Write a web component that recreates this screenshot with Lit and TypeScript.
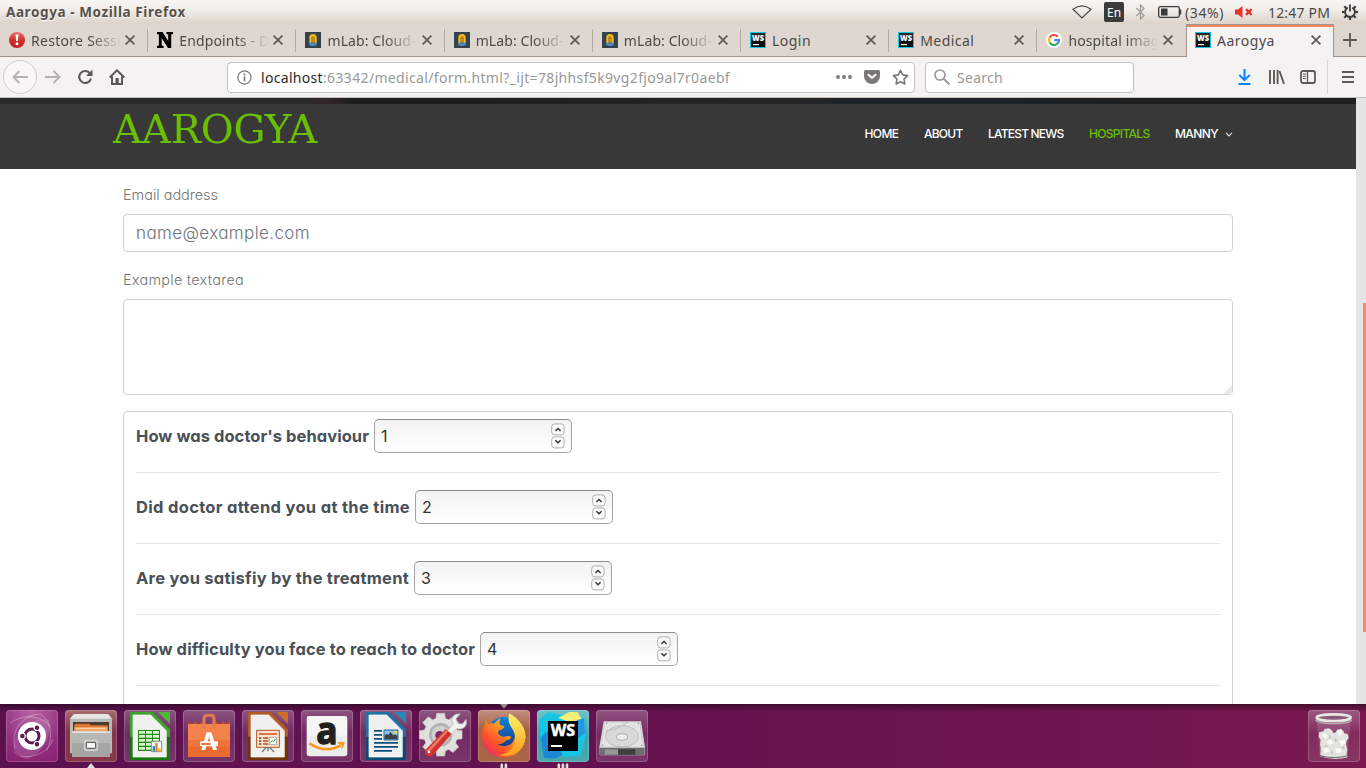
import { LitElement, html, css, svg, nothing } from "lit";
import { customElement, property } from "lit/decorators.js";

/** A single-line label whose letter spacing is tuned to a given advance width. */
@customElement("fit-text")
class FitText extends LitElement {
  @property() text = "";
  @property({ type: Number }) w = 0;
  static styles = css`
    :host { display: inline-block; white-space: pre; flex: none; }
  `;
  firstUpdated() {
    const s = this.renderRoot.querySelector("span") as HTMLElement;
    const gap = (this.w - s.getBoundingClientRect().width) / this.text.length;
    s.style.letterSpacing = gap.toFixed(3) + "px";
    this.style.width = this.w + "px";
  }
  render() {
    return html`<span>${this.text}</span>`;
  }
}

const t = (text: string, w: number) => html`<fit-text .text=${text} .w=${w}></fit-text>`;

/* ---------- favicons, 16x16 ---------- */
const favAlert = svg`<svg width="16" height="16" viewBox="0 0 16 16"><defs><linearGradient id="al" x2="0" y2="1"><stop stop-color="#e8746f"/><stop offset=".5" stop-color="#d42f2c"/><stop offset="1" stop-color="#c01e1e"/></linearGradient></defs><circle cx="8" cy="8" r="8" fill="url(#al)"/><path d="M6.6 2.6h2.8L9 9H7z" fill="#fff"/><circle cx="8" cy="11.8" r="1.5" fill="#fff"/></svg>`;
const favN = svg`<svg width="16" height="16" viewBox="0 0 16 16"><path d="M0 0h5.6l5.6 9V2.6L9.4 2V0H16v2l-1.800.6V16h-3.200L4.700 6v7.400l1.900.6v2H0v-2l1.900-.6V2.600L0 2z" fill="#000"/></svg>`;
const favMlab = svg`<svg width="16" height="16" viewBox="0 0 16 16"><path d="M0 0h16v16H0z" fill="#36424b"/><path d="M4.300 11V5.600a3.700 3.700 0 0 1 7.400 0V11z" fill="#f5b921"/><path d="M4.300 10.500h7.400v2.800q-3.700 1.400-7.400 0z" fill="#4a90d9"/><path d="M7 12V5.800a1 1 0 0 1 2 0V12" fill="none" stroke="#7a5a12" stroke-width=".9"/></svg>`;
const favWs = svg`<svg width="16" height="16" viewBox="0 0 16 16"><path d="M0 0h16v16H0z" fill="#16c5e6"/><path d="M1 1h14v14H1z" fill="#111"/><path d="M1 1h14v7H1z" fill="#333" opacity=".7"/><text x="8" y="8.600" text-anchor="middle" textLength="12" lengthAdjust="spacingAndGlyphs" font-family="Open Sans, sans-serif" font-weight="800" font-size="7.800" fill="#fff">WS</text><path d="M3 12h6v1.200H3z" fill="#fff"/></svg>`;
const favG = svg`<svg width="16" height="16" viewBox="0 0 16 16"><circle cx="8" cy="8" r="8" fill="#fff"/><g fill="none" stroke-width="2.200"><path d="M11.700 4.600A5 5 0 0 0 3.700 5.500" stroke="#ea4335"/><path d="M3.700 5.500a5 5 0 0 0 0 5" stroke="#fbbc05"/><path d="M3.700 10.500a5 5 0 0 0 7.400 1.400" stroke="#34a853"/><path d="M11.100 11.900A5 5 0 0 0 13 8.100H8.200" stroke="#4285f4"/></g></svg>`;

const tabs = [
  { icon: favAlert, text: "Restore Sessi", w: 90, fade: true },
  { icon: favN, text: "Endpoints - D", w: 90, fade: true },
  { icon: favMlab, text: "mLab: Cloud-", w: 88, fade: true },
  { icon: favMlab, text: "mLab: Cloud-", w: 88, fade: true },
  { icon: favMlab, text: "mLab: Cloud-", w: 88, fade: true },
  { icon: favWs, text: "Login", w: 39, fade: false },
  { icon: favWs, text: "Medical", w: 54, fade: false },
  { icon: favG, text: "hospital imag", w: 91, fade: true },
  { icon: favWs, text: "Aarogya", w: 58, fade: false, active: true },
] as any[];

const closeX = svg`<svg class="x" width="10" height="10" viewBox="0 0 10 10"><path d="M.6.600l8.800 8.800M9.400.600L.6 9.400" stroke="#5c5854" stroke-width="1.700"/></svg>`;

/* ---------- launcher icons, drawn on a 156-unit tile ---------- */
const office = (x: number, dark: string, mid: string, body: any) => svg`
  <path d="M${x} 38q0-2 2-2h66l52 52v88q0 4-4 4H${x + 4}q-4 0-4-4z" fill="${dark}"/>
  <path d="M${x} 38q0-2 2-2h66l52 52v22H${x}z" fill="${mid}" opacity=".7"/>
  <path d="M${x + 9} 45h53l47 47v79H${x + 9}z" fill="#f0f0f0" stroke="#fff" stroke-width="2"/>
  <path d="M${x + 84} 36h36v36z" fill="${mid}"/>${body}`;

const dash = svg`
  <path d="M42 160C34 95 85 48 148 60c8 50-18 100-70 118z" fill="#fff" opacity=".13"/>
  <path d="M30 70c40-30 95-25 122 12M45 145C30 90 70 45 120 42c35 20 40 70 20 110M60 168c50 10 90-20 98-50" fill="none" stroke="#fff" stroke-width="3" opacity=".3"/>
  <circle cx="96" cy="108" r="42" fill="#fff"/>
  <circle cx="96" cy="108" r="21" fill="none" stroke="#5f1a4c" stroke-width="9"/>
  <g stroke="#fff" stroke-width="3.500" fill="#5f1a4c"><circle cx="67" cy="108" r="8.500"/><circle cx="111" cy="83" r="8.500"/><circle cx="111" cy="133" r="8.500"/></g>`;
const files = svg`
  <path d="M222 42h102l12 16v102H210V58z" fill="#b9b9b7"/>
  <path d="M222 42h102l12 14H210z" fill="#e6e6e4"/><path d="M219 66h108v34H219z" fill="#4a3a30"/>
  <path d="M223 76l4-5h42l4 5h50v24H223z" fill="#dd7434"/><path d="M223 81h100v17H223z" fill="#f1a667"/><path d="M228 85h90" stroke="#fff" stroke-width="2" opacity=".8"/>
  <path d="M216 94h114v77H216z" fill="#a5a5a3"/><path d="M216 94h114v5H216z" fill="#e0e0de"/><path d="M216 99h114v30H216z" fill="#bcbcba" opacity=".8"/>
  <rect x="253" y="121" width="40" height="31" rx="5" fill="#c9c9c7" stroke="#dededc" stroke-width="2"/><rect x="259" y="127" width="28" height="18" rx="2" fill="#f6f6f6" stroke="#4a4a4a" stroke-width="3"/>`;
const calc = office(390, "#18780f", "#4cb738", svg`
  <path d="M414 90h66v63h-66z" fill="#22890f"/><g fill="#d5f2cc">${[0, 1, 2, 3, 4].map((r) => [0, 1, 2].map((c) => svg`<path d="M${417 + c * 21} ${93 + r * 12}h18v8h-18z"/>`))}</g>
  <path d="M454 124h31v31h-31z" fill="#fff" stroke="#777" stroke-width="2.500"/><path d="M458 138h7v16h-7z" fill="#2c8ccd"/><path d="M466 129h7v25h-7z" fill="#ee7b2b"/><path d="M474 145h8v9h-8z" fill="#f5c21b"/>`);
const software = svg`
  <path d="M566 60l10 14 10-12 10 12 12-12 20 12 20-12 10 12 12-12 8 12 12-14v28H566z" fill="#b94d27"/>
  <path d="M564 72h126v99H564z" fill="#f0743a"/><path d="M564 72h126v48H564z" fill="#f58b56" opacity=".65"/><path d="M564 140h126v31H564z" fill="#e55f24" opacity=".5"/>
  <path d="M612 84V56q0-10 10-10h10q10 0 10 10v28" fill="none" stroke="#e57a50" stroke-width="9"/>
  <path d="M604 150l16-53h14l17 53h-12l-12-40-11 40z" fill="#fff"/><rect x="600" y="124" width="54" height="15" rx="4" fill="#fff"/><path d="M604 129h28v6h-28z" fill="#f0743a"/>`;
const impress = office(39, "#743207", "#cb6d2d", svg`
  <path d="M65 91h68v51H65z" fill="#f8e2d4" stroke="#b5521b" stroke-width="3"/><path d="M72 99h54v6H72z" fill="#db7440"/>
  <path d="M72 112h7v4h-7zm0 9h7v4h-7zm0 9h7v4h-7z" fill="#7d3a12"/><path d="M84 112h16v4H84zm0 9h16v4H84zm0 9h16v4H84z" fill="#b5521b"/>
  <path d="M103 112h22v22h-22z" fill="#fff" stroke="#888" stroke-width="2"/><path d="M106 128l6-6 4 3 6-9" fill="none" stroke="#35a64a" stroke-width="3"/>
  <path d="M81 156l12-13h12l12 13M99 143v11" fill="none" stroke="#777" stroke-width="4"/>`);
const amazon = svg`
  <rect x="215" y="48" width="122" height="121" rx="9" fill="#ececec"/><path d="M216 49h120v58H216z" fill="#fff" opacity=".5"/>
  <text x="276" y="131" text-anchor="middle" textLength="64" lengthAdjust="spacingAndGlyphs" font-family="Open Sans, sans-serif" font-weight="700" font-size="114" fill="#221f1f" stroke="#221f1f" stroke-width="4">a</text>
  <path d="M223 130q48 32 94 6" fill="none" stroke="#f79820" stroke-width="8"/><path d="M305 128q16-5 24 0-1 12-11 21 1-6 4-13-8-3-17-8z" fill="#f79820"/>`;
const writer = office(393, "#064d74", "#2b85b8", svg`
  <path d="M417 90h24v5h-24zm0 12h24v5h-24zm0 12h24v5h-24zm0 12h72v5h-72zm0 12h72v5h-72zm0 12h54v5h-54z" fill="#0d4f7c"/>
  <path d="M447 90h42v30h-42z" fill="#88c4ef" stroke="#0d4f7c" stroke-width="2.500"/><circle cx="482" cy="97" r="5" fill="#f6d144"/><path d="M449 118v-11l6-6 5 4 6-9 9 10 6-3 6 5v10z" fill="#3b4145"/>`);
const settings = svg`
  <g fill="#dededc" stroke="#c9c9c7" stroke-width="2">${[0, 45, 90, 135, 180, 225, 270, 315].map((a) => svg`<path d="M602 62l3-22h24l3 22z" transform="rotate(${a} 617 104)"/>`)}</g>
  <circle cx="617" cy="104" r="51" fill="#e0e0de"/><circle cx="617" cy="104" r="35" fill="#b4b1b4"/><circle cx="617" cy="104" r="27" fill="#d0cfd0"/><circle cx="614" cy="106" r="13" fill="#7b2a68"/>
  <path d="M632 98l22-26c-10-19 4-33 22-30l-13 14 5 14 14 2 11-14c7 24-13 33-28 28l-22 24z" fill="#f0f0ee" stroke="#aaa" stroke-width="2"/>
  <path d="M632 87l18 15-58 65q-9 6-18-2-8-8-1-17z" fill="#d2342b"/><path d="M634 90l5 4-58 64-6-5z" fill="#ee7b70"/><circle cx="582" cy="156" r="4" fill="#fff"/>`;
const firefox = svg`
  <defs><linearGradient id="ff" x1="1" y1="0" x2="0" y2="1"><stop stop-color="#ffe14d"/><stop offset=".4" stop-color="#ff9a1f"/><stop offset=".7" stop-color="#ff4c2c"/><stop offset="1" stop-color="#e31587"/></linearGradient><linearGradient id="fb" x2="0" y2="1"><stop stop-color="#0a84d8"/><stop offset="1" stop-color="#1b2d80"/></linearGradient><linearGradient id="fy" x2="0" y2="1"><stop stop-color="#fff36a"/><stop offset="1" stop-color="#ff9a1f"/></linearGradient></defs>
  <circle cx="103" cy="104" r="53" fill="url(#fb)"/>
  <path d="M50 53q-2 14 4 20 8-4 20-3 10-14 18-15-5 12-3 18 4 5 14 6-2 9-16 12-5 6 0 13 9 9 22 5 8-3 15 1-1 9-15 11-12 14-28 10 24 17 46-3 14-18 5-38-4-22 5-38 30 34 29 62c-3 34-30 58-64 58-38 0-66-28-66-66q0-18 9-30-1-13 5-23z" fill="url(#ff)"/>
  <path d="M118 40q48 30 49 70-3 36-36 54-23 8-45 2c50-8 62-52 37-86q-12-18-5-40z" fill="url(#fy)"/>`;
const webstorm = svg`
  <path d="M209 60l26-24 40 10 46-10 10 20 12-2 4 50-14 62-44 6-30-12-36 15-13-65z" fill="#17c4e4"/><path d="M212 112l30-26 36 78-24 12-32-3z" fill="#1b87d6"/><path d="M264 54l34-18h24l13 20-28 12z" fill="#f5f07a"/><path d="M320 60l22-4 3 44-22 14z" fill="#2494dc"/>
  <path d="M234 63h90v90h-90z" fill="#000"/><text x="279" y="109" text-anchor="middle" textLength="73" lengthAdjust="spacingAndGlyphs" font-family="Open Sans, sans-serif" font-weight="700" font-size="47" fill="#fff" stroke="#fff" stroke-width="1.500">WS</text><path d="M243 135h33v6h-33z" fill="#fff"/>`;
const disk = svg`
  <path d="M401 64h112l12 77v22q0 3-3 3H391q-3 0-3-3v-22z" fill="#d4d4d4"/><path d="M388 143h136v20q0 3-3 3H391q-3 0-3-3z" fill="#6e6e6e"/><path d="M404 148h92v16h-92z" fill="#3f3f3f"/><path d="M404 148h40v16h-40z" fill="#999"/>
  <path d="M405 68h103l10 72H395z" fill="#e3e3e3"/><ellipse cx="456" cy="109" rx="49" ry="32" fill="#d9d9d9" stroke="#b4b4b4" stroke-width="2.500"/><ellipse cx="456" cy="111" rx="17" ry="10" fill="#ececec" stroke="#a2a2a2" stroke-width="2.500"/><path d="M408 93q28-4 44-14l22-12" fill="none" stroke="#bbb" stroke-width="3"/>
  <g fill="#777"><circle cx="410" cy="70" r="2"/><circle cx="505" cy="70" r="2"/><circle cx="398" cy="136" r="2"/><circle cx="515" cy="136" r="2"/></g>`;
const trash = svg`
  <path d="M410 240h102l-9 108q-43 12-84 0z" fill="#c9a5bd" opacity=".22"/>
  <path d="M421 347l1-22-2-12 2-14-6-8 1-14 14-3 2-7 14-2 9 6 4 8 8-2 3-8 12-3 8 8 1 6 11 2 3 12-6 8-2 12 4 14-2 14 3 10q-42 12-82-3z" fill="#e2e2de"/>
  <path d="M424 284l10-5 10 9-8 8zM470 274l14-4 4 12-12 6zM440 304l12-6 10 10-14 8zM478 304l16-6 2 12-12 8zM428 328l14-6 8 12-14 6zM464 326l16-2 6 12-16 4z" fill="#fafaf8"/>
  <path d="M446 282l8 10-4 6zM466 292l6 14-8-2zM436 314l10 8-12-2zM488 318l8 10-10-4zM456 330l4 14-8-6z" fill="#bdbdb8"/>
  <path d="M420 347q42 12 83 0" fill="none" stroke="#666" stroke-width="3"/>
  <ellipse cx="461" cy="233" rx="51" ry="10" fill="#8d5a7a" stroke="#e6e6e4" stroke-width="8"/><path d="M407 240q6 11 54 11 48 0 54-11" fill="none" stroke="#b5b5b3" stroke-width="4"/>`;

const apps = [
  { vb: "18 30 156 156", body: dash, tone: "dash" },
  { vb: "195 30 156 156", body: files, tone: "files", mark: "arrow" },
  { vb: "372 30 156 156", body: calc, tone: "" },
  { vb: "549 30 156 156", body: software, tone: "" },
  { vb: "21 30 156 156", body: impress, tone: "" },
  { vb: "198 30 156 156", body: amazon, tone: "open" },
  { vb: "375 30 156 156", body: writer, tone: "" },
  { vb: "552 30 156 156", body: settings, tone: "" },
  { vb: "24 30 156 156", body: firefox, tone: "fox", mark: "two" },
  { vb: "201 30 156 156", body: webstorm, tone: "storm", mark: "three" },
  { vb: "378 30 156 156", body: disk, tone: "" },
] as any[];

const marks: any = {
  arrow: html`<svg class="mark" width="8" height="5" viewBox="0 0 8 5"><path d="M4 0l4 5H0z" fill="#ddd"/></svg>`,
  two: html`<svg class="top" width="8" height="5" viewBox="0 0 8 5"><path d="M0 0h8L4 4.500z" fill="#9a8f98"/></svg><svg class="mark" width="8" height="5" viewBox="0 0 8 5"><path d="M.5 5V1.500L1.800 0l1.300 1.500V5zM4.600 5V1.500L5.900 0l1.300 1.500V5z" fill="#ddd"/></svg>`,
  three: html`<svg class="mark" width="12" height="5" viewBox="0 0 12 5"><path d="M.5 5V1.500L1.800 0l1.300 1.500V5zM4.600 5V1.500L5.900 0l1.300 1.500V5zM8.700 5V1.500L10 0l1.300 1.500V5z" fill="#ddd"/></svg>`,
};

const questions = [
  { q: "How was doctor's behaviour", w: 233, v: "1" },
  { q: "Did doctor attend you at the time", w: 274, v: "2" },
  { q: "Are you satisfiy by the treatment", w: 273, v: "3" },
  { q: "How difficulty you face to reach to doctor", w: 339, v: "4" },
];

@customElement("app-root")
class AppRoot extends LitElement {
  static styles = css`
    :host { display: grid; grid-template-rows: 24px 33px 41px 606px 64px; width: 1366px; height: 768px; overflow: hidden; font-family: "Noto Sans", "Open Sans", sans-serif; font-size: 14px; color: #4c4a48; }
    * { box-sizing: border-box; }
    svg { display: block; flex: none; }

    .title { display: flex; align-items: center; background: linear-gradient(#f8f6f3, #f1ede8 40%, #dcd3ca); padding: 0 8px 0 6px; }
    .title b { font-weight: 700; font-size: 13.5px; color: #57504a; flex: 1; text-shadow: 0 1px #fff; }
    .en { width: 20px; height: 20px; margin: 0 12px; background: #3c3b3b; border-radius: 2px; color: #fff; font-size: 12px; display: grid; place-items: center; }
    .sys { display: flex; align-items: center; }
    .battery { margin: 0 3px 0 13px; }
    .mute { margin: 0 15px 0 11px; }
    .gear { margin-left: 12px; }

    .tabs { display: flex; background: #dfd6cf; }
    .tab { display: flex; align-items: center; width: 148.2px; padding: 0 13px 0 9.100px; border-bottom: 1px solid #a1958e; position: relative; }
    .tab:not(:nth-child(8)):not(.on)::after { content: ""; position: absolute; right: 0; top: 5px; width: 1px; height: 23px; background: #b5aba4; }
    .tab .lbl { flex: 1; overflow: hidden; margin-left: 6px; display: flex; }
    .tab .fade { -webkit-mask-image: linear-gradient(90deg, #000 58px, transparent 90px); mask-image: linear-gradient(90deg, #000 58px, transparent 90px); }
    .tab .x { margin-left: 4px; }
    .on { background: #f4f3f1; border: solid #a1958e; border-width: 1px 1px 0; padding: 0 12px 2px 8.500px; box-shadow: inset 0 2px #f0875f; }
    .plus { flex: 1; display: grid; place-items: center; border-bottom: 1px solid #a1958e; }

    .bar { display: flex; align-items: center; background: #f4f3f1; border-bottom: 1px solid #c4c0bc; padding: 0 12px 0 3px; }
    .back { width: 34px; height: 34px; border: 1px solid #cfccc8; border-radius: 50%; display: grid; place-items: center; background: #f8f7f6; margin-right: 7px; }
    .reload { margin: 0 16px 0 15px; }
    .url, .search { height: 31px; background: #fff; border: 1px solid #c4c1be; border-radius: 4px; display: flex; align-items: center; font-size: 14px; color: #989898; }
    .url { width: 688px; margin-left: 102px; padding: 0 5px 0 9px; }
    .url .host { color: #2c2a29; margin-left: 9px; }
    .url .path { flex: 1; display: flex; }
    .pocket { margin: 0 12px; }
    .search { width: 209px; margin-left: 10px; padding-left: 8px; gap: 7px; }
    .tools { flex: 1; display: flex; align-items: center; justify-content: flex-end; }
    .library { margin: 0 15px 0 18px; }
    .sep { width: 1px; height: 34px; background: #d6d4d1; margin: 0 14px 0 11px; }

    .view { display: grid; grid-template-columns: 1356px 10px; overflow: hidden; }
    .page { background: #fff; overflow: hidden; font-family: Inter, "Open Sans", sans-serif; font-feature-settings: "cv11"; }
    .strip { height: 6px; background: linear-gradient(90deg, #292929 0 300px, #332727 325px, #1f1f1f 350px 480px, #262626 800px, #1e2226 850px 1000px, #1e1e1e 1150px); }
    .nav { height: 65px; background: #383838; display: flex; justify-content: space-between; padding: 0 123px 0 113px; }
    .brand { font: 40px/47px "DejaVu Serif", serif; color: #6abf00; padding-top: 2px; }
    .menu { display: flex; gap: 25.500px; color: #fff; font-size: 12px; font-weight: 500; line-height: 60px; }
    .menu .cur { color: #6abf00; }
    .menu .drop { display: flex; align-items: center; gap: 7px; height: 60px; }
    .form { padding: 16px 123px 0; }
    .lab { display: flex; height: 21px; line-height: 20px; font-size: 14.5px; font-weight: 300; color: #757575; }
    .field { border: 1px solid #ced4da; border-radius: 4px; }
    .email { height: 38px; margin: 8px 0 18px; padding: 0 12px; line-height: 36px; font-size: 17px; font-weight: 300; color: #6c757d; }
    .area { height: 96px; margin: 8px 0 16px; display: flex; align-items: flex-end; justify-content: flex-end; }
    .box { height: 330px; padding: 7px 12px; color: #495057; }
    .row { display: flex; align-items: center; gap: 5px; height: 34px; font-size: 16.5px; font-weight: 700; }
    .rule { height: 1px; background: #e4e4e4; margin: 19px 0 17px; }
    .num { width: 198px; height: 34px; border: 1px solid #a5a5a5; border-top-color: #8c8c8c; border-radius: 5px; background: linear-gradient(#f2f2f2, #fdfdfd 80%); display: flex; align-items: center; justify-content: space-between; padding: 0 6px 0 6px; font-size: 16px; font-weight: 400; color: #333; }
    .track { background: #e5e5e5; padding: 205px 0 0 7px; }
    .thumb { height: 329px; background: #f28d66; }

    .dock { display: flex; gap: 7px; padding: 6px; background: linear-gradient(#2008199c, #20081900 8px), linear-gradient(90deg, #5b1150, #65114f 45%, #78194f); }
    .app { position: relative; width: 52px; height: 52px; border-radius: 4px; background: linear-gradient(#ffffff48, #ffffff1c 45%, #ffffff26); box-shadow: inset 0 0 0 1px #ffffff30; }
    .app > svg:first-child { border-radius: 4px; }
    .open > svg { overflow: visible; }
    .dash { background: radial-gradient(circle at 50% 10%, #b765a4, #93307f 60%, #86206f); }
    .files { background: linear-gradient(#a76e74, #853649 40%, #86384a); }
    .fox { background: linear-gradient(#c09080, #a85f42 40%, #ab6748); }
    .storm { background: linear-gradient(#6fc4cc, #3ea3b0 50%, #49a9ac); }
    .mark { position: absolute; bottom: -6px; left: 50%; transform: translateX(-50%); }
    .top { position: absolute; top: -6px; left: 22px; }
    .bin { margin-left: auto; background: linear-gradient(#ffffff48, #ffffff14 45%, #ffffff20); }
  `;

  private spinner = html`<svg width="14" height="26" viewBox="0 0 14 26"><g fill="#fafafa" stroke="#b0b0b0"><rect x=".7" y=".9" width="12.400" height="11" rx="3"/><rect x=".7" y="13.900" width="12.400" height="11" rx="3"/></g><path d="M4.400 8L7 5.400 9.600 8M4.400 17.200L7 19.800l2.600-2.600" fill="none" stroke="#333" stroke-width="1.400"/></svg>`;

  render() {
    return html`
      <div class="title">
        <b>${t("Aarogya - Mozilla Firefox", 180)}</b>
        <div class="sys">
          <svg width="20" height="14" viewBox="0 0 20 14"><path d="M1 4.300Q10-2.500 19 4.300L10 13z" fill="none" stroke="#4a4846" stroke-width="1.200"/></svg>
          <div class="en">En</div>
          <svg width="9" height="16" viewBox="0 0 9 16"><path d="M.5 4l7.500 7.500L4.500 15V1L8 4.500.5 12" fill="none" stroke="#a39d98" stroke-width="1.300"/></svg>
          <svg class="battery" width="24" height="12" viewBox="0 0 24 12"><rect x=".7" y=".7" width="20.600" height="10.600" rx="1.500" fill="none" stroke="#3c3b3b" stroke-width="1.300"/><path d="M3 2.500h6.500v7H3z" fill="#3c3b3b"/><path d="M22.500 3.500v5" stroke="#3c3b3b" stroke-width="1.500"/></svg>
          ${t("(34%)", 39)}
          <svg class="mute" width="18" height="12" viewBox="0 0 18 12"><path d="M0 3.500h3L7.500 0v12L3 8.500H0z" fill="#df382c"/><path d="M11 3.200l5.600 5.600m0-5.600L11 8.800" stroke="#df382c" stroke-width="2.400"/></svg>
          ${t("12:47 PM", 62)}
          <svg class="gear" width="16" height="16" viewBox="0 0 16 16"><g stroke="#3c3b3b" fill="none"><path d="M5.700 3.600a5 5 0 1 0 4.600 0" stroke-width="1.900"/><path d="M8 .5v7" stroke-width="1.800"/>${[45, 90, 135, 180, 225, 270, 315].map((a) => svg`<path d="M8 0v2.500" stroke-width="2.200" transform="rotate(${a} 8 8)"/>`)}</g></svg>
        </div>
      </div>

      <div class="tabs">
        ${tabs.map((x) => html`<div class="tab ${x.active ? "on" : ""}">${x.icon}<div class="lbl ${x.fade ? "fade" : ""}">${t(x.text, x.w)}</div>${closeX}</div>`)}
        <div class="plus"><svg width="14" height="14" viewBox="0 0 14 14"><path d="M7 0v14M0 7h14" stroke="#5c5854" stroke-width="1.800"/></svg></div>
      </div>

      <div class="bar">
        <div class="back"><svg width="16" height="14" viewBox="0 0 16 14"><path d="M16 7H1.500M7.500 1l-6 6 6 6" fill="none" stroke="#b5b2af" stroke-width="2"/></svg></div>
        <svg width="18" height="14" viewBox="0 0 18 14"><path d="M1 7h14.500M9.500 1l6 6-6 6" fill="none" stroke="#b5b2af" stroke-width="2"/></svg>
        <svg class="reload" width="16" height="16" viewBox="0 0 16 16"><path d="M12.700 4A6 6 0 1 0 14 9.500" fill="none" stroke="#5c5a58" stroke-width="2.100"/><path d="M15.500.5v6.500H9z" fill="#5c5a58"/></svg>
        <svg width="16" height="16" viewBox="0 0 16 16"><path d="M.7 8.500L8 1.300l7.300 7.200M3 7.500V15h10V7.500" fill="none" stroke="#5c5a58" stroke-width="2"/><path d="M6.500 9h3.200v5H6.500z" fill="#5c5a58"/></svg>
        <div class="url">
          <svg width="15" height="15" viewBox="0 0 15 15"><circle cx="7.500" cy="7.500" r="6.600" fill="none" stroke="#777" stroke-width="1.200"/><path d="M7.500 6.500v4.800M7.500 3.600v1.800" stroke="#777" stroke-width="1.700"/></svg>
          <span class="host">${t("localhost", 62)}</span><span class="path">${t(":63342/medical/form.html?_ijt=78jhhsf5k9vg2fjo9al7r0aebf", 407)}</span>
          <svg width="16" height="4" viewBox="0 0 16 4"><g fill="#777"><circle cx="2" cy="2" r="1.900"/><circle cx="8" cy="2" r="1.900"/><circle cx="14" cy="2" r="1.900"/></g></svg>
          <svg class="pocket" width="16" height="14" viewBox="0 0 16 14"><path d="M1.500 0h13Q16 0 16 1.500V6a8 8 0 0 1-16 0V1.500Q0 0 1.500 0z" fill="#7b7977"/><path d="M4.500 4.700L8 8l3.500-3.300" fill="none" stroke="#fff" stroke-width="2" stroke-linecap="round"/></svg>
          <svg width="17" height="16" viewBox="0 0 17 16"><path d="M8.500 1.400l2.200 4.500 4.900.7-3.600 3.500.9 4.900-4.400-2.300L4.100 15 5 10.100 1.400 6.600l4.900-.7z" fill="none" stroke="#777" stroke-width="1.600" stroke-linejoin="round"/></svg>
        </div>
        <div class="search"><svg width="16" height="16" viewBox="0 0 16 16"><circle cx="6" cy="6" r="5" fill="none" stroke="#999" stroke-width="1.700"/><path d="M9.600 9.600L15.400 15.400" stroke="#999" stroke-width="2"/></svg>${t("Search", 46)}</div>
        <div class="tools">
          <svg width="13" height="16" viewBox="0 0 13 16"><path d="M6.500 0v11M1.300 6l5.200 5.200L11.700 6" fill="none" stroke="#0a84ff" stroke-width="2"/><path d="M.5 15h12" stroke="#0a84ff" stroke-width="2"/></svg>
          <svg class="library" width="16" height="14" viewBox="0 0 16 14"><path d="M1 0v14M5 0v14M8.600 0v14M10.500 1L15 14" stroke="#5c5a58" stroke-width="1.900" fill="none"/></svg>
          <svg width="16" height="14" viewBox="0 0 16 14"><rect x="1" y="1" width="14" height="12" rx="2" fill="none" stroke="#5c5a58" stroke-width="1.800"/><path d="M7.500 1v12" stroke="#5c5a58" stroke-width="1.300"/><path d="M3 4h3M3 6.300h3M3 8.600h3" stroke="#5c5a58"/></svg>
          <div class="sep"></div>
          <svg width="12" height="12" viewBox="0 0 12 12"><path d="M0 1h12M0 6h12M0 11h12" stroke="#5c5a58" stroke-width="1.800"/></svg>
        </div>
      </div>

      <div class="view">
        <div class="page">
          <div class="strip"></div>
          <div class="nav">
            <div class="brand">${t("AAROGYA", 204)}</div>
            <div class="menu">
              ${t("HOME", 34)}${t("ABOUT", 38.5)}${t("LATEST NEWS", 75.5)}<span class="cur">${t("HOSPITALS", 60.5)}</span>
              <span class="drop">${t("MANNY", 43)}<svg width="8" height="5" viewBox="0 0 8 5"><path d="M1 .8L4 3.800 7 .8" fill="none" stroke="#ddd" stroke-width="1.200"/></svg></span>
            </div>
          </div>
          <div class="form">
            <div class="lab">${t("Email address", 95)}</div>
            <div class="field email">${t("name@example.com", 174)}</div>
            <div class="lab">${t("Example textarea", 121)}</div>
            <div class="field area"><svg width="9" height="9" viewBox="0 0 9 9"><path d="M9 0v9H0z" fill="#e9e9e9"/></svg></div>
            <div class="field box">
              ${questions.map((r) => html`<div class="row">${t(r.q, r.w)}<div class="num"><span>${r.v}</span>${this.spinner}</div></div><div class="rule"></div>`)}
            </div>
          </div>
        </div>
        <div class="track"><div class="thumb"></div></div>
      </div>

      <div class="dock">
        ${apps.map((a) => html`<div class="app ${a.tone}"><svg width="52" height="52" viewBox=${a.vb}>${a.body}</svg>${a.mark ? marks[a.mark] : nothing}</div>`)}
        <div class="app bin"><svg width="52" height="52" viewBox="384 210 156 156">${trash}</svg></div>
      </div>
    `;
  }
}
